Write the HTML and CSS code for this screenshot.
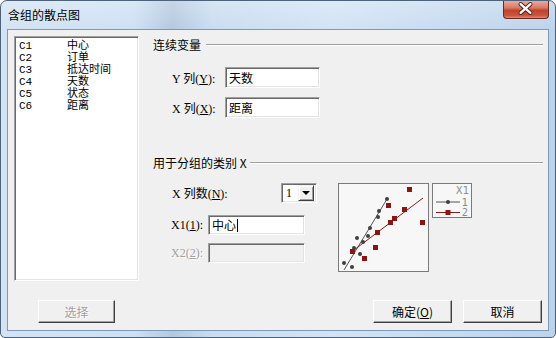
FILE: index.html
```html
<!DOCTYPE html>
<html lang="zh-CN">
<head>
    <meta charset="UTF-8">
    <title>含组的散点图</title>
    <link rel="stylesheet" href="styles.css">
</head>
<body>
    <div class="window">
        <div class="titlebar">
            <span class="title">含组的散点图</span>
            <div class="close">
                <svg width="46" height="18" viewBox="0 0 46 18">
                    <path d="M18 4 L28 13 M28 4 L18 13" stroke="#4a1a14" stroke-width="4.2" stroke-linecap="round"/>
                    <path d="M18 4 L28 13 M28 4 L18 13" stroke="#fff" stroke-width="2.4" stroke-linecap="round"/>
                </svg>
            </div>
        </div>

        <div class="client">
            <div class="listbox">
                <div class="item"><span>C1</span><span>中心</span></div>
                <div class="item"><span>C2</span><span>订单</span></div>
                <div class="item"><span>C3</span><span>抵达时间</span></div>
                <div class="item"><span>C4</span><span>天数</span></div>
                <div class="item"><span>C5</span><span>状态</span></div>
                <div class="item"><span>C6</span><span>距离</span></div>
            </div>

            <div class="panel">
                <div class="group-head"><span>连续变量</span><i class="rule"></i></div>
                <div class="field first">
                    <label class="lbl-y">Y 列(<u>Y</u>):</label>
                    <div class="edit wide">天数</div>
                </div>
                <div class="field">
                    <label class="lbl-y">X 列(<u>X</u>):</label>
                    <div class="edit wide">距离</div>
                </div>

                <div class="group-head second"><span>用于分组的类别 X</span><i class="rule"></i></div>
                <div class="group-body">
                    <div class="fields">
                        <div class="field combo-row">
                            <label class="lbl-n">X 列数(<u>N</u>):</label>
                            <div class="combo"><span>1</span><b class="drop"><i></i></b></div>
                        </div>
                        <div class="field x1">
                            <label class="lbl-x">X1(<u>1</u>):</label>
                            <div class="edit short">中心<i class="caret"></i></div>
                        </div>
                        <div class="field x2 disabled">
                            <label class="lbl-x">X2(<u>2</u>):</label>
                            <div class="edit short"></div>
                        </div>
                    </div>

                    <svg class="plot" width="91" height="89" viewBox="0 0 91 89">
                        <rect x="0.5" y="0.5" width="90" height="88" fill="#f7f7f7" stroke="#7a7a7a"/>
                        <line x1="6" y1="87" x2="49" y2="16" stroke="#555" stroke-width="1"/>
                        <line x1="12" y1="70" x2="85" y2="15" stroke="#8b1a1a" stroke-width="1"/>
                        <g fill="#3f3f3f">
                            <circle cx="6" cy="80" r="2"/>
                            <circle cx="14" cy="84" r="2"/>
                            <circle cx="16" cy="65" r="2"/>
                            <circle cx="22" cy="71" r="2"/>
                            <circle cx="19" cy="55" r="2"/>
                            <circle cx="25" cy="59" r="2"/>
                            <circle cx="30" cy="53" r="2"/>
                            <circle cx="32" cy="45" r="2"/>
                            <circle cx="40" cy="34" r="2"/>
                            <circle cx="41" cy="28" r="2"/>
                            <circle cx="49" cy="16" r="2"/>
                        </g>
                        <g fill="#8b1414">
                            <rect x="69" y="4" width="5" height="5"/>
                            <rect x="48" y="20" width="5" height="5"/>
                            <rect x="64" y="24" width="5" height="5"/>
                            <rect x="54" y="33" width="5" height="5"/>
                            <rect x="50" y="37" width="5" height="5"/>
                            <rect x="82" y="37" width="5" height="5"/>
                            <rect x="37" y="47" width="5" height="5"/>
                            <rect x="35" y="62" width="5" height="5"/>
                            <rect x="12" y="66" width="5" height="5"/>
                            <rect x="24" y="73" width="5" height="5"/>
                        </g>
                    </svg>

                    <svg class="legend" width="40" height="35" viewBox="0 0 40 35">
                        <rect x="0.5" y="0.5" width="39" height="34" fill="#f7f7f7" stroke="#7a7a7a"/>
                        <text x="37" y="11" text-anchor="end">X1</text>
                        <line x1="4" y1="19" x2="28" y2="19" stroke="#555"/>
                        <circle cx="16" cy="19" r="2" fill="#3f3f3f"/>
                        <text x="36" y="23" text-anchor="end">1</text>
                        <line x1="4" y1="29.5" x2="28" y2="29.5" stroke="#8b1a1a"/>
                        <rect x="13.5" y="27" width="5" height="5" fill="#8b1414"/>
                        <text x="36" y="33" text-anchor="end">2</text>
                    </svg>
                </div>
            </div>

            <div class="left-actions">
                <button class="btn select" disabled>选择</button>
            </div>
            <div class="actions">
                <button class="btn">确定(<u>O</u>)</button>
                <button class="btn">取消</button>
            </div>
        </div>
    </div>
</body>
</html>
```

FILE: styles.css
```css
body { margin: 0; width: 556px; height: 338px; overflow: hidden; background: #fff; font-family: "Noto Sans CJK SC", sans-serif; font-size: 12px; }

.window { box-sizing: border-box; width: 556px; height: 338px; padding: 0 6px 6px; border: 1px solid #4d637c; border-radius: 7px 7px 5px 5px; display: flex; flex-direction: column;
    background:
        linear-gradient(180deg, rgba(255,255,255,0.25) 0%, rgba(255,255,255,0) 30px),
        linear-gradient(90deg, #d3e3f4 0%, #cde0f3 24%, #b3c8df 31%, #c9dcf0 38%, #d2e3f4 60%, #bcd3ec 100%); }

.titlebar { height: 28px; display: flex; justify-content: space-between; align-items: center; padding-left: 1px; }
.title { color: #000; font-size: 12px; line-height: 28px; }
.close { align-self: flex-start; width: 46px; height: 18px; box-sizing: border-box; border: 1px solid #6b2a22; border-top: none; border-radius: 0 0 4px 4px; display: flex;
    background: linear-gradient(180deg, #e9a99b 0%, #d97a66 40%, #c0432d 55%, #c95640 85%, #e18a6c 100%); }
.close svg { display: block; margin: -1px 0 0 -1px; }

.client { flex: 1; box-sizing: border-box; border: 1px solid #7f98b3; background: #f0f0f0; display: grid; grid-template-columns: 125px 1fr; grid-template-rows: 245px 23px; column-gap: 14px; row-gap: 19px; padding: 6px 5px 7px 6px; }

.listbox, .edit, .combo { box-sizing: border-box; background: #fff; border: 1px solid; border-color: #a0a0a0 #fff #fff #a0a0a0; box-shadow: inset 1px 1px #696969, inset -1px -1px #e3e3e3; }

.listbox { padding: 3px 0 0 4px; font-family: "Liberation Mono", "Noto Sans CJK SC", monospace; font-size: 11px; }
.item { display: grid; grid-template-columns: 48px 1fr; line-height: 12px; height: 12px; }

.panel { padding-top: 2px; }
.group-head { display: flex; align-items: center; gap: 5px; line-height: 14px; height: 14px; }
.group-head.second { margin-top: 38px; gap: 3px; }
.rule { flex: 1; height: 0; border-top: 1px solid #a0a0a0; border-bottom: 1px solid #fff; }

.field { display: flex; align-items: center; padding-left: 19px; }
.field.first { margin-top: 15px; }
.field + .field { margin-top: 9px; }
.field label { font-family: "Liberation Serif", "Noto Sans CJK SC", serif; font-size: 12px; white-space: nowrap; }
.lbl-y { width: 53px; }
.lbl-n { width: 109px; }
.lbl-x { width: 37px; margin-left: -1px; }

.edit { height: 21px; line-height: 19px; padding-left: 3px; }
.edit.wide { width: 95px; }
.edit.short { width: 97px; height: 20px; line-height: 18px; }
.caret { display: inline-block; width: 1px; height: 13px; background: #000; vertical-align: -2px; margin-left: 1px; }

.group-body { display: flex; margin-top: 13px; }
.fields { width: 185px; }
.fields .field { padding-left: 19px; }
.field.combo-row { margin-top: 0; }
.field.x1 { margin-top: 12px; }
.field.x2 { margin-top: 8px; }
.field.disabled label { color: #a0a0a0; text-shadow: 1px 1px #fff; }
.field.disabled .edit { background: #f0f0f0; }

.combo { width: 36px; height: 20px; display: flex; justify-content: space-between; align-items: center; padding: 2px 2px 2px 4px; font-family: "Liberation Serif", serif; }
.drop { box-sizing: border-box; width: 16px; height: 16px; background: #f0f0f0; border: 1px solid; border-color: #f0f0f0 #404040 #404040 #f0f0f0; box-shadow: inset 1px 1px #fff, inset -1px -1px #a0a0a0; display: flex; align-items: center; justify-content: center; }
.drop i { width: 0; height: 0; border-left: 4px solid transparent; border-right: 4px solid transparent; border-top: 4px solid #000; }

.plot { display: block; }
.legend { display: block; margin-left: 3px; font-family: "DejaVu Sans", sans-serif; font-size: 10px; fill: #8c8c8c; }

.left-actions { padding-left: 24px; }
.actions { display: flex; justify-content: flex-end; gap: 11px; padding-right: 1px; }

.btn { box-sizing: border-box; width: 79px; height: 23px; padding: 0; background: #f0f0f0; border: 1px solid; border-color: #fff #404040 #404040 #fff; box-shadow: inset -1px -1px #a0a0a0; font-family: "Noto Sans CJK SC", sans-serif; font-size: 12px; color: #000; }
.btn.select { width: 77px; }
.btn:disabled { color: #a0a0a0; text-shadow: 1px 1px #fff; }
```
